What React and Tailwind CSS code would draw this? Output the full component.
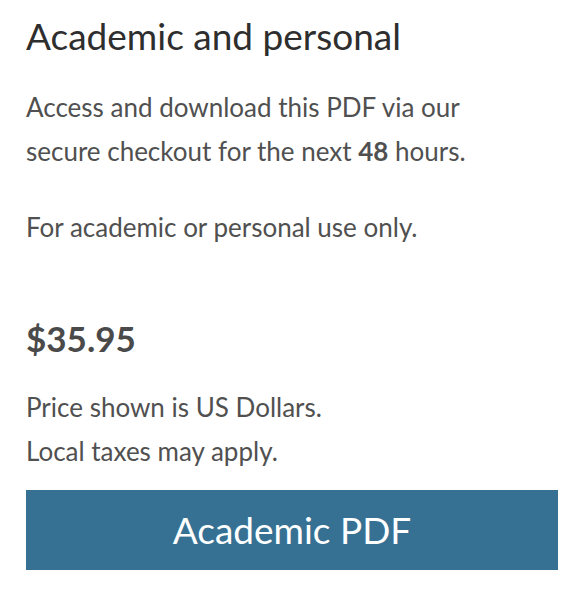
export default function App() {
  return (
    <div className="min-h-screen bg-white px-[26px] pt-[12px] font-['Lato',sans-serif]">
      <h2 className="text-[37px] leading-[48px] text-[#2e2e2e]">Academic and personal</h2>
      <div className="mt-[25px] text-[26px] leading-[44px] text-[#505050]">
        <p>
          Access and download this PDF via our
          <br />
          secure checkout for the next <b className="font-bold">48</b> hours.
        </p>
        <p className="mt-[32px]">For academic or personal use only.</p>
      </div>
      <div className="mt-[65px] text-[35px] font-bold leading-[48px] text-[#4a4a4a]">$35.95</div>
      <div className="mt-[23px] text-[26px] leading-[44px] text-[#505050]">
        <p>Price shown is US Dollars.</p>
        <p>Local taxes may apply.</p>
      </div>
      <button className="mt-[17px] flex h-[80px] w-[532px] items-center justify-center bg-[#367194] text-[37px] text-white">
        Academic PDF
      </button>
    </div>
  );
}
